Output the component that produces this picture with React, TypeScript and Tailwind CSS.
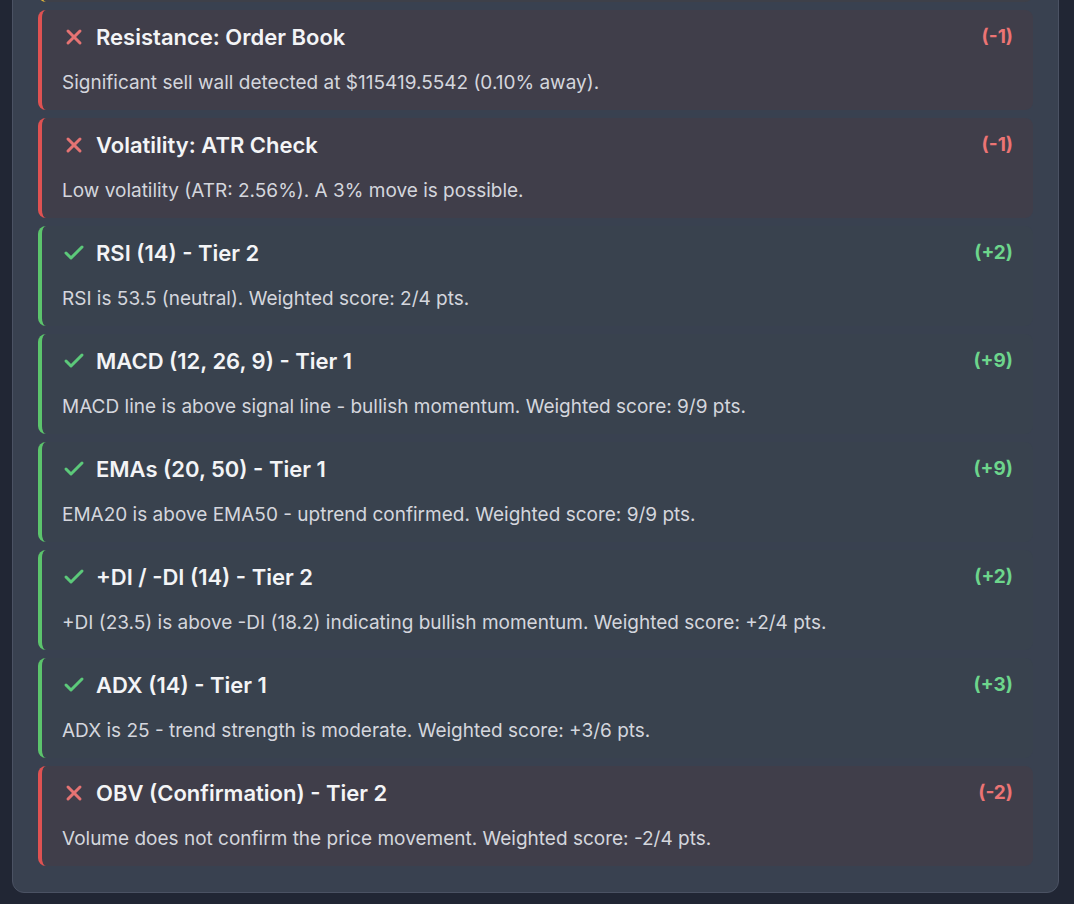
import { Check, X } from "lucide-react";

type Row = {
  ok: boolean;
  title: string;
  detail: string;
  score: string;
};

const rows: Row[] = [
  { ok: false, title: "Resistance: Order Book", detail: "Significant sell wall detected at $115419.5542 (0.10% away).", score: "(-1)" },
  { ok: false, title: "Volatility: ATR Check", detail: "Low volatility (ATR: 2.56%). A 3% move is possible.", score: "(-1)" },
  { ok: true, title: "RSI (14) - Tier 2", detail: "RSI is 53.5 (neutral). Weighted score: 2/4 pts.", score: "(+2)" },
  { ok: true, title: "MACD (12, 26, 9) - Tier 1", detail: "MACD line is above signal line - bullish momentum. Weighted score: 9/9 pts.", score: "(+9)" },
  { ok: true, title: "EMAs (20, 50) - Tier 1", detail: "EMA20 is above EMA50 - uptrend confirmed. Weighted score: 9/9 pts.", score: "(+9)" },
  { ok: true, title: "+DI / -DI (14) - Tier 2", detail: "+DI (23.5) is above -DI (18.2) indicating bullish momentum. Weighted score: +2/4 pts.", score: "(+2)" },
  { ok: true, title: "ADX (14) - Tier 1", detail: "ADX is 25 - trend strength is moderate. Weighted score: +3/6 pts.", score: "(+3)" },
  { ok: false, title: "OBV (Confirmation) - Tier 2", detail: "Volume does not confirm the price movement. Weighted score: -2/4 pts.", score: "(-2)" },
];

const CheckRow = ({ row }: { row: Row }) => {
  return (
    <div
      className={
        row.ok
          ? "rounded-lg border-l-4 border-[#5cc46c] bg-[#39424e] pl-5 pr-5 pt-[13px] pb-[15px]"
          : "rounded-lg border-l-4 border-[#df5252] bg-[#403e4a] pl-5 pr-5 pt-[13px] pb-[15px]"
      }
    >
      <div className="flex items-center justify-between h-7">
        <div className="flex items-center">
          <span className="w-6 h-6 flex items-center justify-center mr-[10px]">
            {row.ok ? (
              <Check size={24} className="text-[#5cc97a]" strokeWidth={3} />
            ) : (
              <X size={24} className="text-[#e57373]" strokeWidth={3} />
            )}
          </span>
          <span className="text-[22px] leading-7 font-semibold text-[#f3f4f6]">{row.title}</span>
        </div>
        <span className={row.ok ? "text-[19px] leading-7 font-bold text-[#6dd58c]" : "text-[19px] leading-7 font-bold text-[#ec7474]"}>
          {row.score}
        </span>
      </div>
      <p className="mt-5 text-[19px] leading-6 text-[#d4d6dd]">{row.detail}</p>
    </div>
  );
};

export default function App() {
  return (
    <div className="h-[904px] overflow-hidden bg-[#212634] pl-3 pr-[15px]" style={{ fontFamily: "Inter, 'Noto Sans', sans-serif" }}>
      <div className="mt-[-123px] rounded-xl border border-[#4b5263] bg-[#394150] px-[25px] pt-6 pb-[26px]">
        <div className="flex flex-col gap-2">
          {/* tail of the card above, scrolled out of view */}
          <div className="h-[100px] rounded-lg border-l-4 border-[#e5b93a] bg-[#3e4049]" />
          {rows.map((row) => (
            <CheckRow key={row.title} row={row} />
          ))}
        </div>
      </div>
    </div>
  );
}
